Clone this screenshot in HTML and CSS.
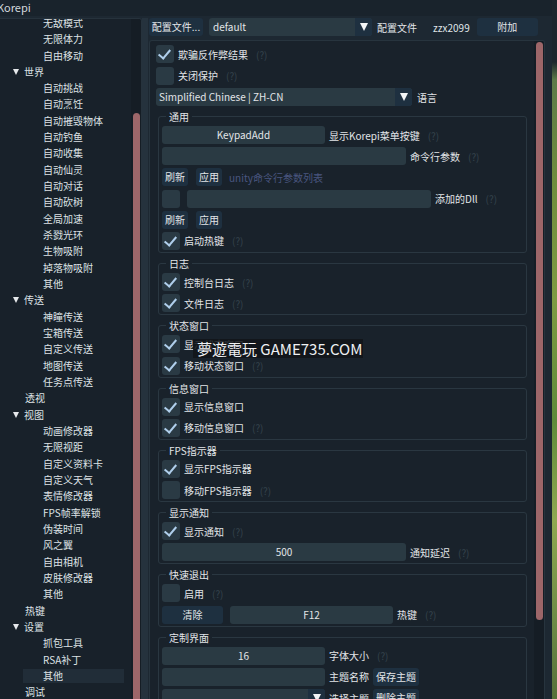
FILE: index.html
```html
<!DOCTYPE html>
<html lang="zh-CN">
<head>
<meta charset="utf-8">
<title>Korepi</title>
<link rel="stylesheet" href="styles.css">
</head>
<body>
<div class="window">
  <div class="titlebar"><span class="title">Korepi</span></div>
  <div class="main">
    <div class="tree-pane">
      <ul class="tree">
        <li class="leaf">无敌模式</li>
        <li class="leaf">无限体力</li>
        <li class="leaf">自由移动</li>
        <li class="node"><span class="arrow"></span>世界</li>
        <li class="leaf">自动挑战</li>
        <li class="leaf">自动烹饪</li>
        <li class="leaf">自动摧毁物体</li>
        <li class="leaf">自动钓鱼</li>
        <li class="leaf">自动收集</li>
        <li class="leaf">自动仙灵</li>
        <li class="leaf">自动对话</li>
        <li class="leaf">自动砍树</li>
        <li class="leaf">全局加速</li>
        <li class="leaf">杀戮光环</li>
        <li class="leaf">生物吸附</li>
        <li class="leaf">掉落物吸附</li>
        <li class="leaf">其他</li>
        <li class="node"><span class="arrow"></span>传送</li>
        <li class="leaf">神瞳传送</li>
        <li class="leaf">宝箱传送</li>
        <li class="leaf">自定义传送</li>
        <li class="leaf">地图传送</li>
        <li class="leaf">任务点传送</li>
        <li class="top">透视</li>
        <li class="node"><span class="arrow"></span>视图</li>
        <li class="leaf">动画修改器</li>
        <li class="leaf">无限视距</li>
        <li class="leaf">自定义资料卡</li>
        <li class="leaf">自定义天气</li>
        <li class="leaf">表情修改器</li>
        <li class="leaf">FPS帧率解锁</li>
        <li class="leaf">伪装时间</li>
        <li class="leaf">风之翼</li>
        <li class="leaf">自由相机</li>
        <li class="leaf">皮肤修改器</li>
        <li class="leaf">其他</li>
        <li class="top">热键</li>
        <li class="node"><span class="arrow"></span>设置</li>
        <li class="leaf">抓包工具</li>
        <li class="leaf">RSA补丁</li>
        <li class="leaf selected">其他</li>
        <li class="top">调试</li>
      </ul>
      <div class="vscroll tree-scroll"><div class="thumb"></div></div>
    </div>
    <div class="splitter"></div>
    <div class="right">
      <div class="toolbar">
        <div class="btn w-profile">配置文件...</div>
        <div class="combo w-default"><span class="combo-text">default</span><span class="combo-arrow"></span></div>
        <span class="lbl gap5">配置文件</span>
        <span class="user">zzx2099</span>
        <div class="btn w-attach">附加</div>
      </div>
      <div class="content-pane">
        <div class="content">
          <div class="top-rows">
            <div class="row"><span class="cb on"></span><span class="lbl">欺骗反作弊结果</span><span class="help">(?)</span></div>
            <div class="row"><span class="cb"></span><span class="lbl">关闭保护</span><span class="help">(?)</span></div>
            <div class="row"><div class="combo w-lang"><span class="combo-text">Simplified Chinese | ZH-CN</span><span class="combo-arrow"></span></div><span class="lbl gap5">语言</span></div>
          </div>

          <fieldset class="group first">
            <legend>通用</legend>
            <div class="rows">
              <div class="row"><div class="btn light w-mid">KeypadAdd</div><span class="lbl">显示Korepi菜单按键</span><span class="help">(?)</span></div>
              <div class="row"><div class="frame w-wide"></div><span class="lbl">命令行参数</span><span class="help">(?)</span></div>
              <div class="row"><div class="btn w-small">刷新</div><div class="btn w-small gap8">应用</div><span class="hint">unity命令行参数列表</span></div>
              <div class="row"><span class="cb"></span><div class="frame w-wide gap7"></div><span class="lbl">添加的Dll</span><span class="help">(?)</span></div>
              <div class="row"><div class="btn w-small">刷新</div><div class="btn w-small gap8">应用</div></div>
              <div class="row"><span class="cb on"></span><span class="lbl">启动热键</span><span class="help">(?)</span></div>
            </div>
          </fieldset>

          <fieldset class="group">
            <legend>日志</legend>
            <div class="rows">
              <div class="row"><span class="cb on"></span><span class="lbl">控制台日志</span><span class="help">(?)</span></div>
              <div class="row"><span class="cb on"></span><span class="lbl">文件日志</span><span class="help">(?)</span></div>
            </div>
          </fieldset>

          <fieldset class="group">
            <legend>状态窗口</legend>
            <div class="rows">
              <div class="row"><span class="cb on"></span><span class="lbl">显示状态窗口</span></div>
              <div class="row"><span class="cb on"></span><span class="lbl">移动状态窗口</span><span class="help">(?)</span></div>
            </div>
          </fieldset>

          <fieldset class="group">
            <legend>信息窗口</legend>
            <div class="rows">
              <div class="row"><span class="cb on"></span><span class="lbl">显示信息窗口</span></div>
              <div class="row"><span class="cb on"></span><span class="lbl">移动信息窗口</span><span class="help">(?)</span></div>
            </div>
          </fieldset>

          <fieldset class="group">
            <legend>FPS指示器</legend>
            <div class="rows">
              <div class="row"><span class="cb on"></span><span class="lbl">显示FPS指示器</span></div>
              <div class="row"><span class="cb"></span><span class="lbl">移动FPS指示器</span><span class="help">(?)</span></div>
            </div>
          </fieldset>

          <fieldset class="group">
            <legend>显示通知</legend>
            <div class="rows">
              <div class="row"><span class="cb on"></span><span class="lbl">显示通知</span><span class="help">(?)</span></div>
              <div class="row"><div class="frame w-wide center">500</div><span class="lbl">通知延迟</span><span class="help">(?)</span></div>
            </div>
          </fieldset>

          <fieldset class="group">
            <legend>快速退出</legend>
            <div class="rows">
              <div class="row"><span class="cb"></span><span class="lbl">启用</span><span class="help">(?)</span></div>
              <div class="row"><div class="btn w-clear">清除</div><div class="frame w-mid center gap7">F12</div><span class="lbl">热键</span><span class="help">(?)</span></div>
            </div>
          </fieldset>

          <fieldset class="group">
            <legend>定制界面</legend>
            <div class="rows">
              <div class="row"><div class="frame w-mid center">16</div><span class="lbl">字体大小</span><span class="help">(?)</span></div>
              <div class="row"><div class="frame w-mid"></div><span class="lbl">主题名称</span><div class="btn w-theme gap4">保存主题</div></div>
              <div class="row"><div class="combo w-mid"><span class="combo-text"></span><span class="combo-arrow"></span></div><span class="lbl">选择主题</span><div class="btn w-theme gap4">删除主题</div></div>
            </div>
          </fieldset>
        </div>
        <div class="vscroll content-scroll"><div class="thumb"></div></div>
      </div>
    </div>
  </div>
  <div class="watermark">夢遊電玩 GAME735.COM</div>
</div>
<div class="game-edge"></div>
</body>
</html>
```

FILE: styles.css
```css
* { box-sizing: border-box; }

html, body { margin: 0; padding: 0; }

body {
  width: 557px;
  height: 699px;
  overflow: hidden;
  display: flex;
  font-family: "Noto Sans CJK SC", "Noto Sans", sans-serif;
  font-size: 10px;
  color: #e2e5e8;
  background: #1e2933;
}

.window {
  position: relative;
  width: 552px;
  height: 699px;
  flex: none;
  display: flex;
  flex-direction: column;
  background: #1d2832;
}

.titlebar {
  height: 16px;
  flex: none;
  background: #19232c;
  font-size: 11px;
  line-height: 15px;
  color: #d3d8dc;
  overflow: hidden;
  white-space: nowrap;
}

.title { margin-left: -3px; }

.main {
  flex: 1;
  min-height: 0;
  display: flex;
}

/* ---------- left tree ---------- */
.tree-pane {
  width: 142px;
  flex: none;
  margin-top: 2px;
  display: flex;
  overflow: hidden;
  background: #18212a;
  border-top: 1px solid #26323c;
  border-right: 1px solid #26323c;
  border-top-right-radius: 3px;
}

.tree {
  flex: 1;
  margin: -4.17px 0 0;
  padding: 0;
  list-style: none;
}

.tree li {
  height: 16.34px;
  line-height: 16.34px;
  white-space: nowrap;
  color: #dde1e5;
}

.tree .leaf { padding-left: 43px; }
.tree .top { padding-left: 25px; }
.tree .node { padding-left: 13px; }

.tree .arrow {
  display: inline-block;
  width: 0;
  height: 0;
  border-left: 3.5px solid transparent;
  border-right: 3.5px solid transparent;
  border-top: 6px solid #e6e9ec;
  margin-right: 5px;
  vertical-align: 1px;
}

.tree .selected {
  margin: 1.5px 7px 1.5px 23px;
  height: 13.34px;
  line-height: 13.34px;
  padding-left: 20px;
  background: #212d38;
}

.vscroll {
  flex: none;
  width: 10px;
  padding-left: 2px;
  background: #151d25;
}

.thumb {
  width: 7px;
  background: #9d6669;
  border-radius: 4px;
}

.tree-scroll .thumb {
  margin-top: 94px;
  height: 700px;
}

.splitter {
  width: 6px;
  flex: none;
  margin-top: 2px;
  background: #25323d;
}

/* ---------- right side ---------- */
.right {
  flex: 1;
  min-width: 0;
  display: flex;
  flex-direction: column;
}

.toolbar {
  height: 18px;
  flex: none;
  margin-top: 2px;
  padding-left: 1px;
  display: flex;
  align-items: center;
  white-space: nowrap;
}

.btn {
  height: 18px;
  line-height: 18px;
  flex: none;
  text-align: center;
  background: #1e3040;
  border-radius: 3px;
  color: #e2e5e8;
}

.btn.light { background: #2a3a43; }

.frame {
  height: 18px;
  line-height: 18px;
  flex: none;
  background: #2a3a43;
  border-radius: 3px;
}

.center { text-align: center; }

.combo {
  height: 18px;
  flex: none;
  display: flex;
  border-radius: 3px;
  overflow: hidden;
  background: #2a3a43;
}

.combo-text {
  flex: 1;
  line-height: 18px;
  padding: 0 4px 0 3px;
  white-space: nowrap;
}

.combo-arrow {
  width: 17px;
  flex: none;
  background: #1e3040;
  display: flex;
  align-items: center;
  justify-content: center;
}

.combo-arrow::after {
  content: "";
  width: 0;
  height: 0;
  border-left: 4.5px solid transparent;
  border-right: 4.5px solid transparent;
  border-top: 8px solid #f2f4f6;
}

.w-profile { width: 54px; }
.w-default { width: 163px; margin-left: 6px; }
.w-default .combo-text { padding-left: 4px; }
.w-attach { width: 61px; margin-left: 7px; }
.user { margin-left: 16px; color: #dfe3e6; }
.w-lang { width: 256px; }
.w-mid { width: 163px; }
.w-wide { width: 244px; }
.w-small { width: 26px; }
.w-clear { width: 61px; }
.w-theme { width: 46px; }

.gap4 { margin-left: 4px; }
.gap5 { margin-left: 5px; }
.gap7 { margin-left: 7px; }
.gap8 { margin-left: 8px; }

.lbl {
  margin-left: 4px;
  white-space: nowrap;
  flex: none;
}

.toolbar .lbl.gap5, .row .lbl.gap5 { margin-left: 5px; }

.help {
  margin-left: 8px;
  color: #35424c;
  white-space: nowrap;
}

.hint {
  margin-left: 7px;
  color: #4a5680;
  white-space: nowrap;
}

.content-pane {
  flex: 1;
  min-height: 0;
  margin: 4px 7px 0 1px;
  display: flex;
  background: #19222b;
  border: 1px solid #27343e;
  border-bottom: none;
  border-radius: 3px 3px 0 0;
  overflow: hidden;
}

.content {
  flex: 1;
  min-width: 0;
  padding: 4px 0 0 6px;
  overflow: hidden;
}

.content-scroll .thumb {
  margin-top: 1px;
  height: 578px;
}

.top-rows {
  display: flex;
  flex-direction: column;
  gap: 3.5px;
}

.row {
  height: 18px;
  display: flex;
  align-items: center;
  white-space: nowrap;
}

.cb {
  width: 18px;
  height: 18px;
  flex: none;
  border-radius: 3px;
  background: #2a3a44;
  position: relative;
}

.cb.on::after {
  content: "";
  position: absolute;
  left: 4.5px;
  top: 2px;
  width: 5px;
  height: 10px;
  border-right: 2.6px solid #b0cfec;
  border-bottom: 2.6px solid #b0cfec;
  transform: rotate(40deg);
  transform-origin: center;
}

.group {
  margin: 4.1px 7px 0 2px;
  padding: 3px 0 2px 3px;
  border: 1px solid #2a3741;
  border-radius: 3px;
  min-width: 0;
}

.group.first { margin-top: 4px; }

.group legend {
  margin-left: 4px;
  padding: 0 3px;
  height: 13px;
  line-height: 13px;
  font-size: 10px;
  color: #e2e5e8;
}

.rows {
  display: flex;
  flex-direction: column;
  gap: 3.2px;
}

/* ---------- overlay & background ---------- */
.watermark {
  position: absolute;
  left: 193px;
  top: 339px;
  width: 170px;
  height: 19px;
  padding-left: 4px;
  background: rgba(17, 21, 25, 0.86);
  font-family: "Noto Sans CJK TC", "Noto Sans", sans-serif;
  font-size: 15px;
  line-height: 19px;
  color: #eef0f2;
  white-space: nowrap;
}

.game-edge {
  flex: 1;
  background: linear-gradient(to bottom,
    #1c262d 0, #1c262d 62px, #5d7a49 80px, #6f8c3d 180px,
    #7e9a42 300px, #5f8a3a 420px, #8fa851 520px, #6d8a46 620px, #56703a 699px);
}
```
